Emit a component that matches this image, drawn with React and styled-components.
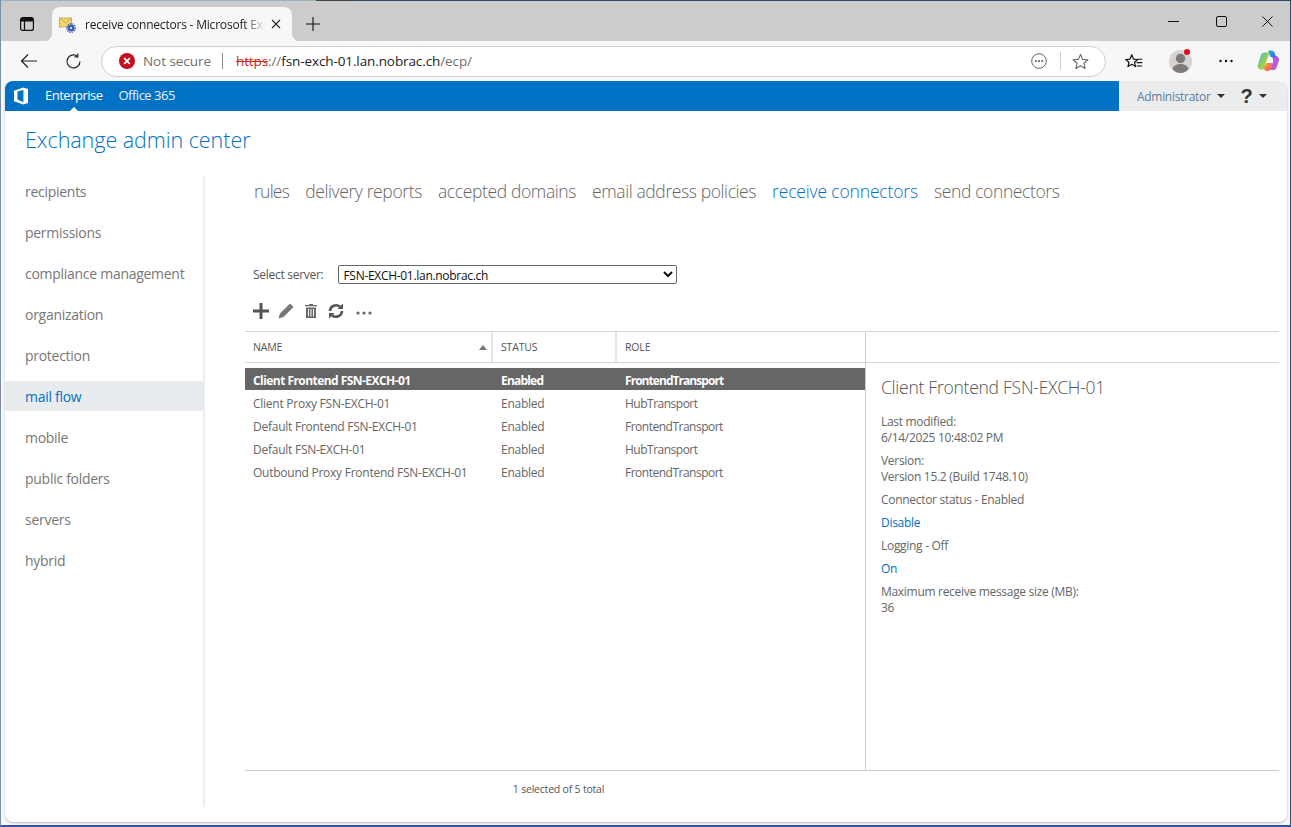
import React from "react";
import styled, { createGlobalStyle } from "styled-components";

const Global = createGlobalStyle`
  html, body { margin: 0; padding: 0; width: 1291px; height: 827px; overflow: hidden; background: #f7f7f7; }
  * { box-sizing: border-box; }
  body { font-family: "Open Sans", "Noto Sans", sans-serif; }
`;

const Win = styled.div`
  width: 1291px; height: 827px; display: flex; flex-direction: column;
  border-left: 1px solid #7d8fa3; border-right: 1px solid #3a4a63; border-bottom: 2px solid #3553a5;
  background: #f7f7f7; overflow: hidden;
`;
const TabStrip = styled.div`
  height: 41px; flex: none; display: flex; align-items: flex-end; background: #cccccc;
  border-top: 1px solid; border-image: linear-gradient(to right, #9fb0bd 0 316px, #444 316px 352px, #2d4a6b 352px) 1;
`;
const SideToggle = styled.div`
  width: 51px; height: 34px; display: flex; align-items: center; justify-content: center; color: #111;
`;
const Tab = styled.div`
  width: 240px; height: 34px; background: #f7f7f7; border-radius: 8px 8px 0 0; position: relative;
  display: flex; align-items: center; padding: 0 11px 0 7px; margin-right: 8px;
  &:before, &:after { content: ""; position: absolute; bottom: 0; width: 8px; height: 8px; }
  &:before { left: -8px; background: radial-gradient(circle at 0 0, #ccc 8px, #f7f7f7 8.5px); }
  &:after { right: -8px; background: radial-gradient(circle at 100% 0, #ccc 8px, #f7f7f7 8.5px); }
`;
const TabTitle = styled.div`
  flex: 1; margin-left: 9px; font-size: 12px; letter-spacing: -0.2px; color: #222; white-space: nowrap; overflow: hidden; margin-right: 6px;
  -webkit-mask-image: linear-gradient(to right, #000 88%, transparent 100%);
  mask-image: linear-gradient(to right, #000 88%, transparent 100%);
`;
const StripBtn = styled.div`
  width: 26px; height: 34px; display: flex; align-items: center; justify-content: center; color: #111;
`;
const WinControls = styled.div`
  margin-left: auto; height: 40px; display: flex; align-items: center; color: #111;
`;
const WinBtn = styled.div`
  width: 46px; height: 40px; display: flex; align-items: center; justify-content: center; margin-right: ${p => p.$mr || 0}px;
`;
const Toolbar = styled.div`
  height: 40px; flex: none; display: flex; align-items: center; background: #f7f7f7; padding-left: 100px; position: relative;
`;
const NavIcon = styled.div`
  position: absolute; top: 6px; left: ${p => p.$x}px; width: 28px; height: 28px; display: flex; align-items: center; justify-content: center; color: #222;
`;
const Address = styled.div`
  width: 1005px; flex: none; height: 31px; background: #fff; border: 1px solid #cfcfcf; border-radius: 16px;
  display: flex; align-items: center; padding: 0 16px 0 17px; font-size: 13.5px; letter-spacing: -0.1px;
`;
const NotSecure = styled.span`
  color: #6f6f6f; margin-left: 8px; letter-spacing: -0.05px; font-size: 13.5px;
`;
const Sep = styled.span`
  width: 1px; height: 16px; background: #8b8b8b; margin: 0 13px 0 11px;
`;
const Https = styled.span` color: #c42b1c; text-decoration: line-through; `;
const Slash = styled.span` color: #6f6f6f; `;
const Host = styled.span` color: #222; `;
const AddrRight = styled.div`
  margin-left: auto; display: flex; align-items: center; color: #555;
`;
const AddrSep = styled.span`
  width: 1px; height: 18px; background: #d0d0d0; margin: 0 11px 0 13px;
`;
const Right = styled.div`
  margin-left: auto; display: flex; align-items: center; padding-right: 3px;
`;
const RightBtn = styled.div`
  width: ${p => p.$w || 46}px; height: 32px; display: flex; align-items: center; justify-content: center; color: #111; position: relative;
`;
const Dot = styled.span`
  position: absolute; top: 4px; left: 27px; width: 6px; height: 6px; border-radius: 50%; background: #e00b1c;
`;

const Page = styled.div`
  flex: 1; margin: 0 3px 3px 4px; background: #fff; border-radius: 8px; overflow: hidden;
  display: flex; flex-direction: column; box-shadow: 0 1px 2px rgba(0,0,0,.25);
  font-family: "Open Sans", "Noto Sans", sans-serif; color: #666;
`;
const TopBar = styled.div`
  height: 30px; flex: none; display: flex; background: #eaecee;
`;
const Blue = styled.div`
  width: 1114px; background: #0072c6; display: flex; align-items: center; padding-left: 8px; color: #fff; font-size: 13px; letter-spacing: -0.5px;
`;
const TopLink = styled.span`
  margin-left: ${p => p.$ml}px; position: relative; display: block; height: 30px; line-height: 28px;
  color: ${p => p.$on ? "#fff" : "#e8f2fa"};
  ${p => p.$on && `&:after { content: ""; position: absolute; left: 50%; bottom: 0; margin-left: -4px; border: 4px solid transparent; border-top: 0; border-bottom-color: #fff; }`}
`;
const AdminArea = styled.div`
  flex: 1; display: flex; align-items: center; padding-left: 18px; font-size: 12px; letter-spacing: -0.3px; color: #5f7d9c;
`;
const Caret = styled.span`
  width: 0; height: 0; border: 4px solid transparent; border-top-color: #333; border-bottom: 0; margin-left: ${p => p.$ml}px;
`;
const Help = styled.span`
  margin-left: 16px; font: bold 20px/30px "Liberation Sans", sans-serif; color: #333;
`;
const Heading = styled.h1`
  margin: 0; height: 65px; flex: none; padding: 14px 0 0 20px; font-weight: 300; font-size: 21.5px; line-height: 30px; letter-spacing: -0.05px; color: #0072c6;
`;
const Body = styled.div`
  flex: 1; display: flex; min-height: 0; padding-bottom: 15px;
`;
const Side = styled.nav`
  width: 200px; flex: none; border-right: 2px solid #eeeeee; display: flex; flex-direction: column; gap: 11px;
`;
const SideItem = styled.div`
  height: 30px; line-height: 30px; padding: 1px 0 0 20px; font-size: 14px; letter-spacing: -0.28px;
  background: ${p => p.$on ? "#e9ecef" : "transparent"}; color: ${p => p.$on ? "#0072c6" : "#777"};
`;
const Main = styled.main`
  flex: 1; display: flex; flex-direction: column; padding: 0 8px 0 40px; min-width: 0;
`;
const Tabs = styled.div`
  height: 89px; flex: none; display: flex; gap: 16px; padding-left: 9px; align-items: flex-start;
`;
const TabLink = styled.span`
  font-size: 17.5px; font-weight: 300; line-height: 30px; letter-spacing: ${p => p.$ls}px; color: ${p => p.$on ? "#0072c6" : "#666"};
`;
const ServerRow = styled.div`
  height: 19px; flex: none; display: flex; align-items: center; padding-left: 8px; font-size: 12px; letter-spacing: -0.28px; color: #555;
`;
const ServerSelect = styled.select`
  margin-left: 15px; width: 339px; height: 19px; font: 12px "Open Sans", sans-serif; letter-spacing: -0.3px; color: #111; background: #fff; border: 1px solid #666; border-radius: 2px; padding: 0;
`;
const Tools = styled.div`
  height: 47px; flex: none; display: flex; align-items: center; padding: 6px 0 0 8px; gap: 9px; color: #555;
`;
const MoreIcon = styled.svg`
  margin: 4px 0 0 3px;
`;
const Grid = styled.div`
  flex: 1; min-height: 0; display: flex; flex-direction: column; border-top: 1px solid #d2d8dc;
`;
const Panes = styled.div`
  flex: 1; min-height: 0; display: flex; border-bottom: 1px solid #c8d0d6;
`;
const ListPane = styled.div`
  width: 621px; flex: none; display: flex; flex-direction: column; border-right: 1px solid #c8ced2;
`;
const HeadRow = styled.div`
  height: 31px; flex: none; display: flex; border-bottom: 1px solid #d2d8dc; align-items: stretch;
`;
const HeadCell = styled.div`
  width: ${p => p.$w}px; flex: none; display: flex; align-items: center; padding: 0 8px; font-size: 10.5px; letter-spacing: -0.15px; color: #555;
  border-right: ${p => p.$last ? "0" : "2px solid #e3e6e8"};
`;
const SortMark = styled.span`
  margin-left: auto; margin-right: -4px; width: 0; height: 0; border: 4px solid transparent; border-top: 0; border-bottom: 5px solid #777;
`;
const Rows = styled.div`
  padding-top: 5px; display: flex; flex-direction: column; gap: 1px;
`;
const Row = styled.div`
  height: 22px; padding-top: 2px; display: grid; grid-template-columns: 248px 124px 1fr; align-items: center; font-size: 12px; letter-spacing: ${p => p.$sel ? "-0.55px" : "-0.25px"};
  background: ${p => p.$sel ? "#666" : "transparent"}; color: ${p => p.$sel ? "#fff" : "#666"}; font-weight: ${p => p.$sel ? 700 : 400};
`;
const Cell = styled.span` padding-left: 8px; white-space: nowrap; letter-spacing: ${p => p.$ls || "inherit"}; `;
const DetailPane = styled.div`
  flex: 1; display: flex; flex-direction: column;
`;
const DetailHead = styled.div`
  height: 31px; flex: none; border-bottom: 1px solid #d2d8dc;
`;
const DetailBody = styled.div`
  padding: 12px 0 0 15px; font-size: 12px; line-height: 16px; letter-spacing: -0.3px; color: #666;
`;
const DetailTitle = styled.div`
  font-size: 17.5px; font-weight: 300; line-height: 24px; letter-spacing: -0.25px; color: #555; margin-bottom: 15px;
`;
const DetailLine = styled.div`
  margin-bottom: 7px;
`;
const DLink = styled.span` color: #0072c6; `;
const Status = styled.div`
  height: 36px; flex: none; display: flex; align-items: center; justify-content: center; width: 627px; font-size: 10.5px; letter-spacing: -0.2px; color: #555;
`;

const Office = () => (
  <svg width="16" height="18" viewBox="0 0 16 18">
    <path fill="#fff" d="M1 3.800 10.400.6 15 2v14l-4.600 1.600L1 14.200zM10.400 15.200V3L4.500 4.500v8z" fillRule="evenodd" />
  </svg>
);
const Fav = () => (
  <svg width="17" height="17" viewBox="0 0 17 17">
    <rect x="0.5" y="2" width="12" height="9" fill="#f5d76e" stroke="#b89b3a" strokeWidth=".7" />
    <path d="M.5 2 6.500 7l6-5" fill="none" stroke="#b89b3a" strokeWidth=".8" />
    <circle cx="12" cy="12" r="3.600" fill="#3a5bb0" />
    <circle cx="12" cy="12" r="4.400" fill="none" stroke="#3a5bb0" strokeWidth="1.200" strokeDasharray="1.200 1.200" />
    <circle cx="12" cy="12" r="1.200" fill="#cfd9f2" />
  </svg>
);
const Copilot = () => (
  <svg width="24" height="24" viewBox="0 0 24 24">
    <defs>
      <linearGradient id="c1" x1="0" y1="0" x2="1" y2="1"><stop offset="0" stopColor="#1fb6d9" /><stop offset="1" stopColor="#2f6fe0" /></linearGradient>
      <linearGradient id="c2" x1="0" y1="0" x2="1" y2="1"><stop offset="0" stopColor="#8a5cf0" /><stop offset="1" stopColor="#e85ac0" /></linearGradient>
      <linearGradient id="c3" x1="0" y1="0" x2="1" y2="1"><stop offset="0" stopColor="#4fc3c9" /><stop offset=".6" stopColor="#9ad04a" /><stop offset="1" stopColor="#f4c430" /></linearGradient>
      <linearGradient id="c4" x1="0" y1="0" x2="1" y2="1"><stop offset="0" stopColor="#f6a040" /><stop offset="1" stopColor="#ef5a5a" /></linearGradient>
    </defs>
    <path fill="url(#c3)" d="M8.500 3.500h5L9 16c-.6 1.800-.2 3.200 1.500 4.500H5.500c-2.700 0-4.300-2.200-3.600-4.800l2.600-8.800C5 5 6.500 3.500 8.500 3.500z" />
    <path fill="url(#c2)" d="M14 7h5.500c2.600 0 4 2.400 3.400 4.600l-2 6.300c-.6 2-2 3.100-4 3.100H14l3-8c.8-2.600 0-4.500-3-6z" />
    <path fill="url(#c1)" d="M12 1.500h3.500c1.500 0 2.700.9 3.200 2.400L20 8h-4c-1.200 0-2-.6-2.300-1.700L13 4c-.2-1-.5-1.800-1-2.500z" />
    <path fill="url(#c4)" d="M10.500 14h6l-1.300 4.800c-.6 2-1.800 3.200-3.900 3.200-1.700 0-3-.9-3.300-2.600-.2-1 .3-1.800.9-2.700z" />
  </svg>
);

const rows = [
  ["Client Frontend FSN-EXCH-01", "Enabled", "FrontendTransport"],
  ["Client Proxy FSN-EXCH-01", "Enabled", "HubTransport"],
  ["Default Frontend FSN-EXCH-01", "Enabled", "FrontendTransport"],
  ["Default FSN-EXCH-01", "Enabled", "HubTransport"],
  ["Outbound Proxy Frontend FSN-EXCH-01", "Enabled", "FrontendTransport"],
];
const side = ["recipients", "permissions", "compliance management", "organization", "protection", "mail flow", "mobile", "public folders", "servers", "hybrid"];
const tabs = [["rules", -0.75], ["delivery reports", -0.38], ["accepted domains", -0.38], ["email address policies", -0.4], ["receive connectors", -0.16], ["send connectors", -0.38]];

export default function App() {
  return (
    <>
      <Global />
      <Win>
        <TabStrip>
          <SideToggle>
            <svg width="16" height="16" viewBox="0 0 16 16" fill="none" stroke="#111" strokeWidth="1.200">
              <rect x="1.600" y="1.600" width="12.800" height="12.800" rx="2" />
              <path d="M1.600 5h12.800M5.500 5v9.400" />
              <rect x="2" y="2" width="12" height="3" fill="#111" stroke="none" />
            </svg>
          </SideToggle>
          <Tab>
            <Fav />
            <TabTitle>receive connectors - Microsoft Exchange</TabTitle>
            <svg width="10" height="10" viewBox="0 0 10 10" stroke="#222" strokeWidth="1.100"><path d="M1 1l8 8M9 1l-8 8" /></svg>
          </Tab>
          <StripBtn>
            <svg width="14" height="14" viewBox="0 0 14 14" stroke="#111" strokeWidth="1.100"><path d="M7 0v14M0 7h14" /></svg>
          </StripBtn>
          <WinControls>
            <WinBtn $mr={2}><svg width="11" height="11" viewBox="0 0 11 11" stroke="#111" strokeWidth="1"><path d="M0 5.500h11" /></svg></WinBtn>
            <WinBtn><svg width="11" height="11" viewBox="0 0 11 11" fill="none" stroke="#111" strokeWidth="1"><rect x=".5" y=".5" width="10" height="10" rx="1.500" /></svg></WinBtn>
            <WinBtn><svg width="11" height="11" viewBox="0 0 11 11" stroke="#111" strokeWidth="1"><path d="M.5.5l10 10M10.500.5l-10 10" /></svg></WinBtn>
          </WinControls>
        </TabStrip>
        <Toolbar>
          <NavIcon $x={14}>
            <svg width="18" height="16" viewBox="0 0 18 16" fill="none" stroke="#222" strokeWidth="1.200"><path d="M17 8H1.500M8 1.500 1.500 8 8 14.500" /></svg>
          </NavIcon>
          <NavIcon $x={58}>
            <svg width="17" height="17" viewBox="0 0 17 17" fill="none" stroke="#222" strokeWidth="1.200"><path d="M15 8.500A6.500 6.500 0 1 1 12.500 3.300" /><path d="M12.800.5v3.300H9.500" /></svg>
          </NavIcon>
          <Address>
            <svg width="16" height="16" viewBox="0 0 16 16">
              <circle cx="8" cy="8" r="8" fill="#c50f1f" />
              <path d="M5.200 5.200l5.600 5.600M10.800 5.200l-5.600 5.600" stroke="#fff" strokeWidth="1.800" />
            </svg>
            <NotSecure>Not secure</NotSecure>
            <Sep />
            <Https>https</Https><Slash>://</Slash><Host>fsn-exch-01.lan.nobrac.ch</Host><Slash>/ecp/</Slash>
            <AddrRight>
              <svg width="16" height="16" viewBox="0 0 16 16" fill="none" stroke="#666" strokeWidth="1"><circle cx="8" cy="8" r="7.300" /><circle cx="4.800" cy="8" r=".7" fill="#666" /><circle cx="8" cy="8" r=".7" fill="#666" /><circle cx="11.200" cy="8" r=".7" fill="#666" /></svg>
              <AddrSep />
              <svg width="17" height="17" viewBox="0 0 24 24" fill="none" stroke="#666" strokeWidth="1.500" strokeLinejoin="round"><path d="M12 2l3 7 7.500.6-5.700 4.900 1.800 7.300L12 17.900l-6.600 3.900 1.800-7.300L1.500 9.600 9 9z" /></svg>
            </AddrRight>
          </Address>
          <Right>
            <RightBtn>
              <svg width="18" height="17" viewBox="0 0 24 22" fill="none" stroke="#111" strokeWidth="1.600" strokeLinejoin="round"><path d="M9 2l2.400 5.800 5.600.5-4.300 3.700 1.300 5.800L9 14.700l-5 3.100 1.300-5.800L1 8.300l5.600-.5zM17 8h6M15.500 12.500H23M15.500 17H23" /></svg>
            </RightBtn>
            <RightBtn>
              <svg width="23" height="23" viewBox="0 0 23 23">
                <circle cx="11.500" cy="11.500" r="11.500" fill="#d6d3d0" />
                <circle cx="11.500" cy="8.500" r="4.700" fill="#7d7a78" />
                <path d="M3.500 19c1-3.500 4-5 8-5s7 1.500 8 5c-2 2.600-5 4-8 4s-6-1.400-8-4z" fill="#7d7a78" />
              </svg>
              <Dot />
            </RightBtn>
            <RightBtn>
              <svg width="14" height="4" viewBox="0 0 14 4" fill="#111"><circle cx="1.500" cy="2" r="1.200" /><circle cx="7" cy="2" r="1.200" /><circle cx="12.500" cy="2" r="1.200" /></svg>
            </RightBtn>
            <RightBtn $w={38}><Copilot /></RightBtn>
          </Right>
        </Toolbar>
        <Page>
          <TopBar>
            <Blue>
              <Office />
              <TopLink $ml={16} $on>Enterprise</TopLink>
              <TopLink $ml={16}>Office 365</TopLink>
            </Blue>
            <AdminArea>
              Administrator
              <Caret $ml={6} />
              <Help>?</Help>
              <Caret $ml={7} />
            </AdminArea>
          </TopBar>
          <Heading>Exchange admin center</Heading>
          <Body>
            <Side>
              {side.map(s => <SideItem key={s} $on={s === "mail flow"}>{s}</SideItem>)}
            </Side>
            <Main>
              <Tabs>
                {tabs.map(([t, ls]) => <TabLink key={t} $ls={ls} $on={t === "receive connectors"}>{t}</TabLink>)}
              </Tabs>
              <ServerRow>
                Select server:
                <ServerSelect defaultValue="a"><option value="a">FSN-EXCH-01.lan.nobrac.ch</option></ServerSelect>
              </ServerRow>
              <Tools>
                <svg width="16" height="16" viewBox="0 0 16 16" fill="#555"><path d="M6.500 0h3v6.500H16v3H9.500V16h-3V9.500H0v-3h6.500z" /></svg>
                <svg width="16" height="16" viewBox="0 0 16 16" fill="#777"><path d="M12 .5 15.500 4 5.500 14 .5 15.500 2 10.500z" /></svg>
                <svg width="16" height="16" viewBox="0 0 16 16" fill="#666"><path d="M6 1h4v1h4v1.300H2V2h4zM3 4.500h10V15H3zm2 1.500v7.500h1V6zm2.500 0v7.500h1V6zM10 6v7.500h1V6z" fillRule="evenodd" /></svg>
                <svg width="16" height="16" viewBox="0 0 16 16" fill="none" stroke="#555" strokeWidth="2.600"><path d="M2 8a6 6 0 0 1 10-4.200M14 8a6 6 0 0 1-10 4.200" /><path d="M15 .5v5.500H9.500zM1 15.500V10h5.500z" fill="#555" stroke="none" /></svg>
                <MoreIcon width="16" height="4" viewBox="0 0 16 4" fill="#666"><circle cx="2" cy="2" r="1.600" /><circle cx="8" cy="2" r="1.600" /><circle cx="14" cy="2" r="1.600" /></MoreIcon>
              </Tools>
              <Grid>
                <Panes>
                  <ListPane>
                    <HeadRow>
                      <HeadCell $w={248}>NAME<SortMark /></HeadCell>
                      <HeadCell $w={124}>STATUS</HeadCell>
                      <HeadCell $w={248} $last>ROLE</HeadCell>
                    </HeadRow>
                    <Rows>
                      {rows.map((r, i) => (
                        <Row key={r[0]} $sel={i === 0}>
                          <Cell>{r[0]}</Cell>
                          <Cell $ls={i === 0 ? "-0.8px" : undefined}>{r[1]}</Cell>
                          <Cell $ls={i === 0 ? "-0.95px" : "-0.5px"}>{r[2]}</Cell>
                        </Row>
                      ))}
                    </Rows>
                  </ListPane>
                  <DetailPane>
                    <DetailHead />
                    <DetailBody>
                      <DetailTitle>Client Frontend FSN-EXCH-01</DetailTitle>
                      <DetailLine>Last modified:<br />6/14/2025 10:48:02 PM</DetailLine>
                      <DetailLine>Version:<br />Version 15.2 (Build 1748.10)</DetailLine>
                      <DetailLine>Connector status - Enabled</DetailLine>
                      <DetailLine><DLink>Disable</DLink></DetailLine>
                      <DetailLine>Logging - Off</DetailLine>
                      <DetailLine><DLink>On</DLink></DetailLine>
                      <DetailLine>Maximum receive message size (MB):<br />36</DetailLine>
                    </DetailBody>
                  </DetailPane>
                </Panes>
                <Status>1 selected of 5 total</Status>
              </Grid>
            </Main>
          </Body>
        </Page>
      </Win>
    </>
  );
}
